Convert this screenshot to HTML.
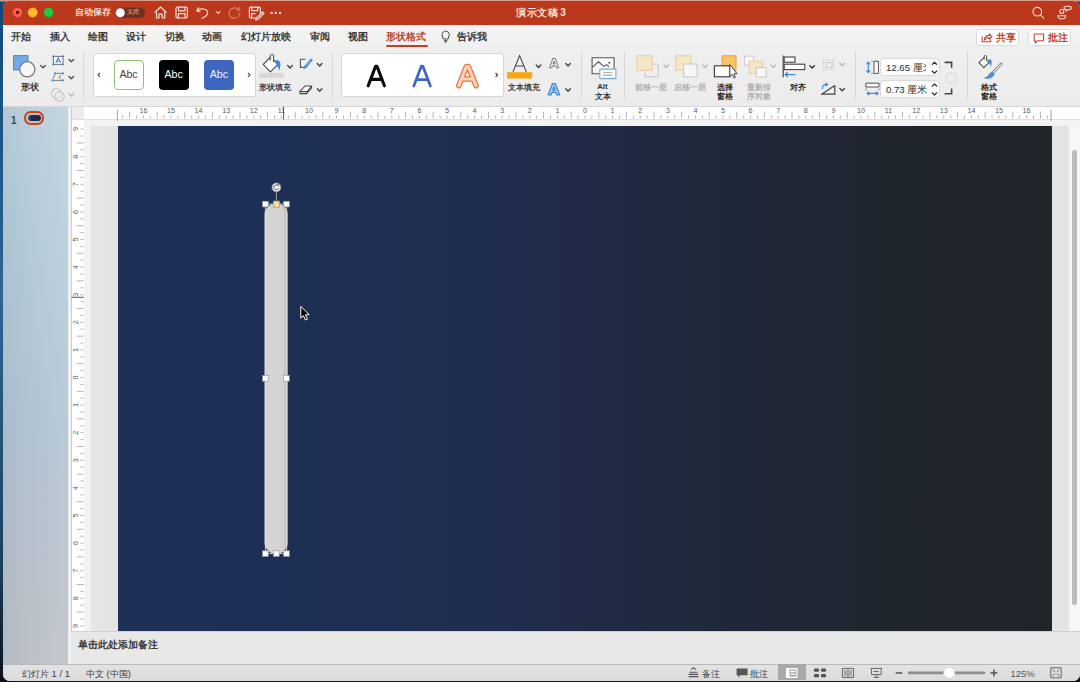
<!DOCTYPE html>
<html><head><meta charset="utf-8">
<style>
*{margin:0;padding:0;box-sizing:border-box}
html,body{width:1080px;height:682px;overflow:hidden}
body{position:relative;font-family:"Liberation Sans",sans-serif;background:linear-gradient(180deg,#d89a8a 0px,#d89a8a 1px,#0f4a7a 2px,#2e6590 300px,#1c4060 560px,#0a121c 682px)}
.abs{position:absolute}
.win{position:absolute;left:3px;top:1px;width:1077px;height:679.5px;border-radius:7px;overflow:hidden;background:#e6e6e6}
.t{position:absolute;white-space:nowrap;line-height:1}
svg{position:absolute;overflow:visible}
</style></head><body>
<div class="win">

<div class="abs" style="left:-3px;top:-1px;width:1080px;height:682px">
<div class="abs" style="left:0;top:0;width:1090px;height:25px;background:#bc381c"></div>
<svg style="left:0;top:0" width="1080" height="25">
<circle cx="17.5" cy="12.5" r="4.8" fill="#fe5f57" stroke="#c2402f" stroke-width="0.6"/>
<circle cx="17.5" cy="12.5" r="1.7" fill="#6e0b05"/>
<circle cx="32.7" cy="12.5" r="4.8" fill="#febc2e" stroke="#c58a1c" stroke-width="0.6"/>
<circle cx="48.6" cy="12.5" r="4.8" fill="#28c840" stroke="#1e9a30" stroke-width="0.6"/>
</svg>
<div class="t" style="left:75px;top:8px;font-size:8.6px;font-weight:600;color:#f6dcd5">自动保存</div>
<svg style="left:0;top:0" width="1080" height="25">
<rect x="114.8" y="7.6" width="30.2" height="10.4" rx="5.2" fill="#6d3024"/>
<circle cx="120.2" cy="12.8" r="4.6" fill="#ffffff"/>
</svg>
<div class="t" style="left:127px;top:9.6px;font-size:5.8px;color:#e6b8ad">关闭</div>
<svg style="left:0;top:0" width="1080" height="25" fill="none" stroke="#f7e2dc" stroke-width="1.2" stroke-linejoin="round" stroke-linecap="round">
<path d="M155 12.2 L160.6 7 L166.2 12.2 M156.5 11 V18 H159 V14.2 H162.2 V18 H164.8 V11"/>
<rect x="176" y="7.2" width="11.4" height="10.8" rx="1.5"/>
<path d="M178.5 7.4 V10.8 H184.9 V7.4 M178.3 18 V13.6 H185.1 V18"/>
<path d="M198.2 7.8 L196.8 10.8 L200 11.6 M197.2 10.6 C200 7.8 207.6 8.4 207.6 12.6 C207.6 15.6 204.4 17.4 202 18.2"/>
<path d="M216.4 11.6 L218.2 13.4 L220 11.6" stroke-width="1.1"/>
<path d="M239.2 10 C237.8 7.2 232 7 229.6 10.6 C227.6 14.2 230.6 18.4 234.4 18.2 C237.2 18 239.6 15.8 239.8 12.8 M239.6 7.2 V10.2 H236.6" stroke="#d47a63"/>
<rect x="249.4" y="7.2" width="11" height="10.8" rx="1.5"/>
<path d="M251.8 7.4 V10.6 H257.8 V7.4 M251.6 18 V13.6 H255"/>
<path d="M256 18.4 L262.6 11.8 L264 13.2 L257.4 19.6 L255.6 19.8 Z" fill="#bc381c"/>
</svg>
<svg style="left:0;top:0" width="1080" height="25" fill="#f7e2dc">
<circle cx="271.6" cy="12.9" r="1.2"/><circle cx="275.8" cy="12.9" r="1.2"/><circle cx="280" cy="12.9" r="1.2"/>
</svg>
<div class="t" style="left:516.3px;top:8px;font-size:10px;color:#f8e4de;font-weight:700;letter-spacing:0.6px">演示文稿<span style="margin-left:1.5px">3</span></div>
<svg style="left:0;top:0" width="1080" height="25" fill="none" stroke="#f7e2dc" stroke-width="1.1" stroke-linecap="round">
<circle cx="1037.3" cy="11.7" r="4.3"/><path d="M1040.4 14.8 L1043.8 18.2"/>
<circle cx="1061.8" cy="11.5" r="2"/>
<path d="M1058 15.8 H1065.6 C1065.6 18.4 1063.6 19 1061.8 19 C1060 19 1058 18.4 1058 15.8 Z"/>
<path d="M1064 7.8 C1064 6.6 1065 6.2 1066.4 6.2 H1069 C1070.4 6.2 1071.2 6.8 1071.2 8 C1071.2 9.2 1070.4 9.8 1069 9.8 H1067.6 L1066.4 11 V9.8 C1064.8 9.8 1064 9.2 1064 7.8 Z"/>
</svg>
<div class="abs" style="left:0;top:25px;width:1090px;height:82px;background:linear-gradient(180deg,#f4f4f4,#efefef 30%,#ececec);border-bottom:1px solid #d6d6d6"></div>
<div class="t" style="left:11.2px;top:31.5px;font-size:10px;font-weight:600;color:#3a3a3a">开始</div>
<div class="t" style="left:50px;top:31.5px;font-size:10px;font-weight:600;color:#3a3a3a">插入</div>
<div class="t" style="left:87.5px;top:31.5px;font-size:10px;font-weight:600;color:#3a3a3a">绘图</div>
<div class="t" style="left:126.2px;top:31.5px;font-size:10px;font-weight:600;color:#3a3a3a">设计</div>
<div class="t" style="left:164.5px;top:31.5px;font-size:10px;font-weight:600;color:#3a3a3a">切换</div>
<div class="t" style="left:202px;top:31.5px;font-size:10px;font-weight:600;color:#3a3a3a">动画</div>
<div class="t" style="left:240.5px;top:31.5px;font-size:10px;font-weight:600;color:#3a3a3a">幻灯片放映</div>
<div class="t" style="left:310px;top:31.5px;font-size:10px;font-weight:600;color:#3a3a3a">审阅</div>
<div class="t" style="left:347.5px;top:31.5px;font-size:10px;font-weight:600;color:#3a3a3a">视图</div>
<div class="t" style="left:386px;top:31.5px;font-size:10px;font-weight:600;color:#c0452a">形状格式</div>
<div class="abs" style="left:386px;top:44.6px;width:41.5px;height:2.4px;border-radius:1.2px;background:#c23f1f"></div>
<svg style="left:0;top:0" width="1080" height="60" fill="none" stroke="#444" stroke-width="1">
<path d="M443.3 39 C443.3 37.5 442 36.5 442 34.8 C442 32.6 443.8 31.2 445.7 31.2 C447.6 31.2 449.4 32.6 449.4 34.8 C449.4 36.5 448.1 37.5 448.1 39 Z"/>
<path d="M444 40.6 H447.4 M444.4 42 H447"/>
</svg>
<div class="t" style="left:457px;top:31.5px;font-size:10px;font-weight:600;color:#3a3a3a">告诉我</div>
<div class="abs" style="left:975.6px;top:28.7px;width:43.8px;height:17.5px;border-radius:3px;background:#fff;border:1px solid #dcdcdc"></div>
<div class="abs" style="left:1028px;top:28.7px;width:43.3px;height:17.5px;border-radius:3px;background:#fff;border:1px solid #dcdcdc"></div>
<div class="t" style="left:995.5px;top:32.8px;font-size:10px;color:#c0432a;font-weight:bold">共享</div>
<div class="t" style="left:1048.3px;top:32.8px;font-size:10px;color:#c0432a;font-weight:bold">批注</div>
<svg style="left:0;top:0" width="1080" height="60" fill="none" stroke="#c0432a" stroke-width="1.1" stroke-linejoin="round">
<path d="M982.2 36.4 V41.8 H990.6 V39.6"/>
<path d="M984.4 40 C984.6 36.6 986.6 35.4 989.4 35.4 V33.8 L992 36.6 L989.4 39.2 V37.6 C987.4 37.6 985.8 38.2 984.4 40 Z"/>
<path d="M1034.2 34 H1043.6 V40.8 H1037.6 L1035.4 42.8 V40.8 H1034.2 Z"/>
</svg>
<div class="abs" style="left:83.3px;top:52px;width:1px;height:47px;background:#d8d8d8"></div>
<div class="abs" style="left:332.0px;top:52px;width:1px;height:47px;background:#d8d8d8"></div>
<div class="abs" style="left:580.7px;top:52px;width:1px;height:47px;background:#d8d8d8"></div>
<div class="abs" style="left:624.3px;top:52px;width:1px;height:47px;background:#d8d8d8"></div>
<div class="abs" style="left:854.5px;top:52px;width:1px;height:47px;background:#d8d8d8"></div>
<div class="abs" style="left:966.6px;top:52px;width:1px;height:47px;background:#d8d8d8"></div>
<svg style="left:0;top:0" width="1080" height="110">
<rect x="13.6" y="55.6" width="14.4" height="14.4" fill="#72aae4" stroke="#3f8bd9" stroke-width="1"/>
<circle cx="27.3" cy="69.3" r="7.6" fill="#f7f7f7" stroke="#7a7a7a" stroke-width="1.3"/>
<rect x="53.4" y="56.4" width="9.6" height="8" fill="#fff" stroke="#7a7a7a" stroke-width="1.1"/>
<path d="M55.8 63 L58.2 57.8 L60.6 63 M56.7 61.2 H59.7" fill="none" stroke="#3f8bd9" stroke-width="1.1"/>
<g fill="#3f8bd9"><circle cx="53.2" cy="56.2" r="1"/><circle cx="63.2" cy="56.2" r="1"/><circle cx="53.2" cy="64.6" r="1"/><circle cx="63.2" cy="64.6" r="1"/>
<rect x="54" y="72.4" width="2" height="2"/><rect x="61.8" y="72.4" width="2" height="2"/><rect x="51.6" y="79.4" width="2" height="2"/><rect x="61.8" y="79.4" width="2" height="2"/></g>
<path d="M56 73.4 H61.8 M60.8 75 L59 77.2 L60.8 78.8 M53 78.6 L54.8 75 M53.6 80.4 H61.8" fill="none" stroke="#7a7a7a" stroke-width="1"/>
<circle cx="56.4" cy="93.4" r="4.8" fill="#f2f2f2" stroke="#c4c4c4" stroke-width="1.1"/>
<circle cx="59.4" cy="96.4" r="4.8" fill="#e9e9e9" fill-opacity="0.6" stroke="#c4c4c4" stroke-width="1.1"/>
</svg>
<svg style="left:0;top:0" width="1080" height="110"><path d="M40.7 65.39999999999999 L43 67.8 L45.3 65.39999999999999" fill="none" stroke="#555" stroke-width="1.4" stroke-linecap="round" stroke-linejoin="round"/><path d="M69.0 59.4 L71.3 61.800000000000004 L73.6 59.4" fill="none" stroke="#555" stroke-width="1.4" stroke-linecap="round" stroke-linejoin="round"/><path d="M69.0 76.39999999999999 L71.3 78.8 L73.6 76.39999999999999" fill="none" stroke="#555" stroke-width="1.4" stroke-linecap="round" stroke-linejoin="round"/><path d="M69.0 93.6 L71.3 96.0 L73.6 93.6" fill="none" stroke="#bbb" stroke-width="1.4" stroke-linecap="round" stroke-linejoin="round"/></svg>
<div class="t" style="left:20.8px;top:83.1px;font-size:8.6px;font-weight:600;color:#3a3a3a">形状</div>
<div class="abs" style="left:92.5px;top:52.6px;width:163.3px;height:44.7px;background:#fff;border:1px solid #d6d6d6;border-radius:3px"></div>
<div class="abs" style="left:113.9px;top:60px;width:29.7px;height:29.7px;background:#fff;border:1.2px solid #8fbf74;border-radius:4px"></div>
<div class="abs" style="left:159px;top:60px;width:29.7px;height:29.7px;background:#000;border-radius:4px"></div>
<div class="abs" style="left:204.2px;top:60px;width:29.7px;height:29.7px;background:#3e68bf;border-radius:4px"></div>
<div class="t" style="left:119.4px;top:69.4px;font-size:10.6px;color:#444">Abc</div>
<div class="t" style="left:164.5px;top:69.4px;font-size:10.6px;color:#fff">Abc</div>
<div class="t" style="left:209.7px;top:69.4px;font-size:10.6px;color:#f0f4ff">Abc</div>
<svg style="left:0;top:0" width="1080" height="110" fill="none" stroke="#444" stroke-width="1.1">
<path d="M100 72.8 L98 74.8 L100 76.8"/><path d="M248 72.8 L250 74.8 L248 76.8"/>
</svg>
<svg style="left:0;top:0" width="1080" height="110" fill="none" stroke-linejoin="round">
<path d="M263.2 64.4 L270.6 57 L278 64.3 L270.4 71.8 Z" fill="#fff" stroke="#4a4a4a" stroke-width="1.1"/>
<path d="M270.2 60.6 V55.8 C270.2 54 273.6 54 273.6 55.8 V62" fill="#f4f4f4" stroke="#4a4a4a" stroke-width="1"/>
<path d="M275.2 60.6 C278.4 59.2 281 61.6 280.4 65.4 C280 67.6 279.6 69 279.4 70.8 C278.6 68.4 277.8 66 275.8 63.8 C276.4 62.6 276 61.4 275.2 60.6 Z" fill="#3d88d6"/>
<rect x="259" y="73" width="24.6" height="5" fill="#d8d8d8" stroke="none"/>
<path d="M305.6 59.3 H300.4 V67.4 H303.6" stroke="#555" stroke-width="1.1"/>
<path d="M304.4 66.6 L310.4 59.2 C311 58.4 312.6 59.6 312 60.4 L306 67.8 L303.8 68.6 Z" fill="#3d88d6" stroke="#3d88d6" stroke-width="0.8"/>
<path d="M306.4 65.2 L310.2 60.6" stroke="#cfe3f7" stroke-width="0.7"/>
<path d="M300 91.4 L305 86 H311.6 L307.2 91.6 Z" fill="#fff" stroke="#444" stroke-width="1.1"/>
<path d="M300 91.4 V93.6 H306.6 L311.6 88 V86" stroke="#444" stroke-width="1.1"/>
</svg>
<svg style="left:0;top:0" width="1080" height="110"><path d="M287.7 65.5 L290 67.9 L292.3 65.5" fill="none" stroke="#444" stroke-width="1.4" stroke-linecap="round" stroke-linejoin="round"/><path d="M317.3 63.599999999999994 L319.6 66.0 L321.90000000000003 63.599999999999994" fill="none" stroke="#444" stroke-width="1.4" stroke-linecap="round" stroke-linejoin="round"/><path d="M317.3 88.8 L319.6 91.2 L321.90000000000003 88.8" fill="none" stroke="#444" stroke-width="1.4" stroke-linecap="round" stroke-linejoin="round"/></svg>
<div class="t" style="left:259px;top:84.1px;font-size:8.2px;font-weight:600;color:#3a3a3a">形状填充</div>
<div class="abs" style="left:341px;top:53px;width:163.2px;height:44.4px;background:#fff;border:1px solid #d6d6d6;border-radius:3px"></div>
<svg style="left:0;top:0" width="1080" height="110">
<path d="M368.2 85.8 L375.6 66.2 H377 L384.4 85.8 M371 79.4 H381.6" fill="none" stroke="#0a0a0a" stroke-width="3.1" stroke-linecap="round" stroke-linejoin="round"/>
<path d="M413.8 86 L421.4 66 H422.8 L430.4 86 M416.6 79.6 H427.6" fill="none" stroke="#3d66c4" stroke-width="2.7" stroke-linecap="round" stroke-linejoin="round"/>
<path d="M458.8 85.6 L466.4 66.6 H468.4 L476 85.6 M462 79 H472.8" fill="none" stroke="#e8773e" stroke-width="5.6" stroke-linecap="round" stroke-linejoin="round"/>
<path d="M458.8 85.6 L466.4 66.6 H468.4 L476 85.6 M462 79 H472.8" fill="none" stroke="#fbd6bd" stroke-width="3" stroke-linecap="round" stroke-linejoin="round"/>
<path d="M495.6 73 L497.6 75 L495.6 77" fill="none" stroke="#444" stroke-width="1.1"/>
</svg>
<svg style="left:0;top:0" width="1080" height="110" fill="none">
<path d="M513 71.9 L519.6 55.6 L526.3 71.9 M515.2 66 H524" stroke="#444" stroke-width="1.1"/>
<rect x="507" y="72.2" width="25.2" height="6.3" fill="#f7a80d"/>
<path d="M549.6 67.8 L552.8 58.5 L555.4 58.5 L558.6 67.8 L556.3 67.8 L555.5 65.8 L552.7 65.8 L551.9 67.8 Z M553.1 63.9 L555.1 63.9 L554.1 61.1 Z" fill="#f2f2f2" stroke="#6a6a6a" stroke-width="0.9" stroke-linejoin="round"/>
<path d="M548.2 94.8 L552.3 83.7 L555.5 83.7 L559.6 94.8 L556.6 94.8 L555.7 92.4 L552.1 92.4 L551.2 94.8 Z M552.6 90.1 L555.2 90.1 L553.9 86.8 Z" fill="#a9cdf0" stroke="#3d88d6" stroke-width="1.2" stroke-linejoin="round"/>
</svg>
<svg style="left:0;top:0" width="1080" height="110"><path d="M536.2 65.1 L538.5 67.5 L540.8 65.1" fill="none" stroke="#444" stroke-width="1.4" stroke-linecap="round" stroke-linejoin="round"/><path d="M565.8000000000001 63.599999999999994 L568.1 66.0 L570.4 63.599999999999994" fill="none" stroke="#444" stroke-width="1.4" stroke-linecap="round" stroke-linejoin="round"/><path d="M565.8000000000001 88.8 L568.1 91.2 L570.4 88.8" fill="none" stroke="#444" stroke-width="1.4" stroke-linecap="round" stroke-linejoin="round"/></svg>
<div class="t" style="left:507.8px;top:84.1px;font-size:8.2px;font-weight:600;color:#3a3a3a">文本填充</div>
<svg style="left:0;top:0" width="1080" height="110" fill="none" stroke="#555" stroke-width="1.1">
<path d="M599.8 73.8 H592.1 V57.7 H614.1 V69.2 H599.8 Z" fill="#fafafa" stroke="none"/><path d="M599.8 73.8 H592.1 V57.7 H614.1 V69.2"/>
<path d="M592.4 67.4 L598.4 61.8 L603.8 66.4 L606.8 64.6 L609 67"/>
<circle cx="609.3" cy="62.7" r="1" fill="#555" stroke="none"/>
<rect x="599.8" y="69.2" width="16.1" height="9.4" rx="0.8" fill="#fff" stroke="#6fb0de" stroke-width="1.2"/>
<path d="M603.2 72.6 H612.4" stroke="#aaa" stroke-width="1"/><path d="M603.2 75.2 H612.4" stroke="#888" stroke-width="0.9"/>
</svg>
<div class="t" style="left:597.2px;top:82.8px;font-size:7.8px;color:#333;font-weight:bold">Alt</div>
<div class="t" style="left:595.4px;top:91.6px;font-size:8.4px;font-weight:600;color:#3a3a3a">文本</div>
<svg style="left:0;top:0" width="1080" height="110" stroke-width="1">
<rect x="636.8" y="55.8" width="15.4" height="14.4" fill="#f6e6c8" stroke="#f1c9a4"/>
<path d="M652.2 64 H658.2 V76.9 H644.9 V70.2" fill="none" stroke="#c6c6c6"/>
<rect x="675.6" y="55.8" width="15.4" height="14.4" fill="#f6e6c8" stroke="#f1c9a4"/>
<rect x="683.6" y="64" width="13.4" height="12.9" fill="#f6f6f6" stroke="#c6c6c6"/>
<rect x="722.2" y="55.8" width="13.8" height="14.4" fill="#fbc56a" stroke="#e59c2b"/>
<rect x="714.4" y="65.8" width="15.6" height="11" fill="#fff" stroke="#444" stroke-width="1.2"/>
<path d="M729.8 64.6 V76.4 L732.2 74.4 L734 78 L735.4 77.2 L733.8 73.8 L737 73.6 Z" fill="#fff" stroke="#333" stroke-width="0.9" stroke-linejoin="round"/>
<rect x="744.6" y="56.2" width="9" height="9" fill="#f7f7f7" stroke="#c8c8c8"/>
<rect x="749.2" y="61" width="13.6" height="12.6" fill="#f6e6c8" stroke="#f1c9a4"/>
<rect x="756.4" y="67.6" width="9.8" height="9.4" fill="#f7f7f7" stroke="#c8c8c8"/>
<path d="M783.2 55.6 V77.2" fill="none" stroke="#444" stroke-width="1.2"/>
<rect x="784.2" y="57" width="10.8" height="5.2" fill="#fff" stroke="#444" stroke-width="1.1"/>
<rect x="784.2" y="64.2" width="20.6" height="5.4" fill="#fff" stroke="#444" stroke-width="1.1"/>
<path d="M785.2 74.6 H795.4 M787.8 72.2 L785.2 74.6 L787.8 77" fill="none" stroke="#3d84d0" stroke-width="1.2"/>
<rect x="823.4" y="60" width="10" height="9.6" fill="none" stroke="#c8c8c8" stroke-dasharray="1.5 1.2"/>
<rect x="826" y="62.6" width="6" height="5" fill="none" stroke="#c8c8c8"/>
<path d="M821.6 94.2 L834.8 85.6 V94.2 Z" fill="none" stroke="#444" stroke-width="1.2" stroke-linejoin="round"/>
<path d="M822.4 89.2 C822 86 824 84.2 827.4 84.4 M825.6 82.6 L827.6 84.4 L825.6 86.2" fill="none" stroke="#3d84d0" stroke-width="1.1"/>
</svg>
<svg style="left:0;top:0" width="1080" height="110"><path d="M663.9000000000001 65.0 L666.2 67.4 L668.5 65.0" fill="none" stroke="#bbb" stroke-width="1.4" stroke-linecap="round" stroke-linejoin="round"/><path d="M702.8000000000001 65.0 L705.1 67.4 L707.4 65.0" fill="none" stroke="#bbb" stroke-width="1.4" stroke-linecap="round" stroke-linejoin="round"/><path d="M771.0 65.0 L773.3 67.4 L775.5999999999999 65.0" fill="none" stroke="#bbb" stroke-width="1.4" stroke-linecap="round" stroke-linejoin="round"/><path d="M809.9000000000001 65.7 L812.2 68.10000000000001 L814.5 65.7" fill="none" stroke="#333" stroke-width="1.4" stroke-linecap="round" stroke-linejoin="round"/><path d="M839.9000000000001 63.3 L842.2 65.7 L844.5 63.3" fill="none" stroke="#bbb" stroke-width="1.4" stroke-linecap="round" stroke-linejoin="round"/><path d="M839.9000000000001 88.39999999999999 L842.2 90.8 L844.5 88.39999999999999" fill="none" stroke="#444" stroke-width="1.4" stroke-linecap="round" stroke-linejoin="round"/></svg>
<div class="t" style="left:635px;top:84.1px;font-size:8.2px;font-weight:600;color:#b0b0b0">前移一层</div>
<div class="t" style="left:674px;top:84.1px;font-size:8.2px;font-weight:600;color:#b0b0b0">后移一层</div>
<div class="t" style="left:716.5px;top:84.1px;font-size:8.2px;font-weight:600;color:#2a2a2a">选择</div>
<div class="t" style="left:716.5px;top:93px;font-size:8.2px;font-weight:600;color:#2a2a2a">窗格</div>
<div class="t" style="left:746.6px;top:84.1px;font-size:8.2px;font-weight:600;color:#b0b0b0">重新排</div>
<div class="t" style="left:746.6px;top:93px;font-size:8.2px;font-weight:600;color:#b0b0b0">序对象</div>
<div class="t" style="left:790px;top:84.1px;font-size:8.2px;font-weight:600;color:#2a2a2a">对齐</div>
<div class="abs" style="left:880.4px;top:58.2px;width:59.7px;height:18px;background:#fff;border:1px solid #dadada;border-radius:4px;overflow:hidden"><div class="t" style="left:4.6px;top:4.2px;font-size:9.6px;color:#2a2a2a;width:40px;overflow:hidden">12.65 厘米</div></div>
<div class="abs" style="left:880.4px;top:79.9px;width:59.7px;height:18px;background:#fff;border:1px solid #dadada;border-radius:4px;overflow:hidden"><div class="t" style="left:4.6px;top:4.2px;font-size:9.6px;color:#2a2a2a">0.73 厘米</div></div>
<svg style="left:0;top:0" width="1080" height="110" fill="none" stroke="#333" stroke-width="1.2" stroke-linecap="round" stroke-linejoin="round">
<path d="M932.2 64.4 L934.5 62.2 L936.8 64.4 M932.2 71 L934.5 73.2 L936.8 71"/>
<path d="M932.2 86.2 L934.5 84 L936.8 86.2 M932.2 92.8 L934.5 95 L936.8 92.8"/>
<path d="M944.6 62.4 H951.6 V67.8 M944.6 93.8 H951.6 V88.4" stroke="#444" stroke-width="1.6" stroke-linecap="butt" stroke-linejoin="miter"/>
<rect x="946.2" y="73" width="10" height="10.2" rx="2.2" fill="#ececec" stroke="#d2d2d2" stroke-width="0.8"/>
<rect x="874.4" y="61.2" width="4" height="12.2" fill="#fff" stroke="#555" stroke-width="1"/>
<path d="M868.3 62.4 V72.2 M866.6 64 L868.3 62 L870 64 M866.6 70.6 L868.3 72.6 L870 70.6" stroke="#3d88d6" stroke-width="1.1"/>
<path d="M871.6 61.2 H873 M871.6 73.4 H873" stroke="#777" stroke-width="0.8"/>
<rect x="866.2" y="83.2" width="12.8" height="3.8" fill="#fff" stroke="#555" stroke-width="1"/>
<path d="M867.4 93.4 H877.8 M869 91.8 L867.1 93.4 L869 95 M876.2 91.8 L878.1 93.4 L876.2 95" stroke="#3d88d6" stroke-width="1.1"/>
<path d="M866.2 88.6 V90 M879 88.6 V90" stroke="#777" stroke-width="0.8"/>
</svg>
<svg style="left:0;top:0" width="1080" height="110" fill="none" stroke-linejoin="round">
<path d="M978.9 62.7 L984 57.6 L989.2 62.4 L983.8 67.6 Z" fill="#fff" stroke="#4a4a4a" stroke-width="1.1"/>
<path d="M984.2 59.6 V56.6 C984.2 55.2 986.6 55.2 986.6 56.6 V60.8" fill="#f4f4f4" stroke="#4a4a4a" stroke-width="1"/>
<path d="M988.2 59.4 C990.6 58.4 992 60.4 991.6 63 C991.4 64.6 991.2 65.6 991 67 C990.4 65.4 989.8 63.6 988.6 62 C989 61 988.8 60.2 988.2 59.4 Z" fill="#3d88d6"/>
<path d="M1001 63.8 L992.3 73.4" stroke="#666" stroke-width="2.6" stroke-linecap="round"/>
<path d="M1001 63.8 L992.3 73.4" stroke="#fff" stroke-width="1.1" stroke-linecap="round"/>
<path d="M992.8 72.4 C990.6 72.2 989 73.8 988.2 75.6 C987.4 77 986 77.6 984.4 77.8 C988.4 79.4 993.2 77.8 994.2 74.2 Z" fill="#4a90dc" stroke="#3d88d6" stroke-width="0.6"/>
</svg>
<div class="t" style="left:980.6px;top:84.1px;font-size:8.2px;font-weight:600;color:#2a2a2a">格式</div>
<div class="t" style="left:980.6px;top:93px;font-size:8.2px;font-weight:600;color:#2a2a2a">窗格</div>
<div class="abs" style="left:0;top:107px;width:68px;height:557px;background:linear-gradient(180deg,#bfd5e0 0%,#b8cddb 35%,#b6c7d6 60%,#bec5ce 85%,#c2c6cc 100%)"></div>
<div class="abs" style="left:0;top:107px;width:68px;height:557px;background:linear-gradient(90deg,rgba(40,60,80,0.09),rgba(40,60,80,0.03) 45%,rgba(255,255,255,0.04) 100%)"></div>
<div class="abs" style="left:68px;top:107px;width:4px;height:557px;background:#eef0f2;border-right:1px solid #cfcfcf"></div>
<div class="t" style="left:11px;top:115.8px;font-size:10px;font-weight:bold;color:#444">1</div>
<div class="abs" style="left:24.4px;top:111.3px;width:19.5px;height:13.4px;border-radius:6.5px;background:#cdbfb8;border:2.5px solid #c9441f"></div>
<div class="abs" style="left:27.6px;top:114.6px;width:13.2px;height:6.8px;border-radius:3.4px;background:linear-gradient(90deg,#3c5a90,#1d2d55 25%,#1c2740)"></div>
<div class="abs" style="left:72px;top:107px;width:12px;height:13px;background:#ececec;border-bottom:1px solid #dedede"></div>
<div class="abs" style="left:84px;top:107px;width:1000px;height:13px;background:#fff;border-bottom:1px solid #e0e0e0"></div>
<div class="abs" style="left:72px;top:120px;width:12px;height:510.5px;background:#fff"></div>
<div class="abs" style="left:84px;top:120px;width:985px;height:510.5px;background:#e4e4e4"></div>
<div class="abs" style="left:84px;top:120px;width:1000px;height:5.5px;background:#f3f3f3"></div>
<div class="abs" style="left:84px;top:120px;width:6.5px;height:510.5px;background:#f3f3f3"></div>
<div class="abs" style="left:90.5px;top:125.5px;width:27.5px;height:505px;background:linear-gradient(90deg,#e7e7e7,#e2e2e2)"></div>
<div class="abs" style="left:118px;top:125.5px;width:934.3px;height:505px;background:linear-gradient(90deg,#1e3059 0%,#1e2f54 22%,#1f2d4f 40%,#1f2a40 58%,#1f2839 68%,#20262e 82%,#20252c 100%)"></div>
<div class="abs" style="left:1068.7px;top:125.5px;width:20px;height:505px;background:#f7f7f7"></div>
<div class="abs" style="left:1071.5px;top:150px;width:5.8px;height:454.6px;border-radius:3px;background:#bcbcbc"></div>
<svg style="left:0;top:0" width="1080" height="682" stroke="#a6a6a6" stroke-width="0.85" font-family="Liberation Sans" font-size="7.2" fill="#5a5a5a" text-anchor="middle">
<line x1="122.7" y1="115.5" x2="122.7" y2="118.5"/>
<line x1="129.6" y1="111.5" x2="129.6" y2="118.5"/>
<line x1="136.5" y1="115.5" x2="136.5" y2="118.5"/>
<line x1="143.4" y1="115.5" x2="143.4" y2="118.5"/>
<text stroke="none" x="143.4" y="112.8">16</text>
<line x1="150.3" y1="115.5" x2="150.3" y2="118.5"/>
<line x1="157.2" y1="111.5" x2="157.2" y2="118.5"/>
<line x1="164.1" y1="115.5" x2="164.1" y2="118.5"/>
<line x1="171.0" y1="115.5" x2="171.0" y2="118.5"/>
<text stroke="none" x="171.0" y="112.8">15</text>
<line x1="177.9" y1="115.5" x2="177.9" y2="118.5"/>
<line x1="184.8" y1="111.5" x2="184.8" y2="118.5"/>
<line x1="191.7" y1="115.5" x2="191.7" y2="118.5"/>
<line x1="198.6" y1="115.5" x2="198.6" y2="118.5"/>
<text stroke="none" x="198.6" y="112.8">14</text>
<line x1="205.5" y1="115.5" x2="205.5" y2="118.5"/>
<line x1="212.4" y1="111.5" x2="212.4" y2="118.5"/>
<line x1="219.3" y1="115.5" x2="219.3" y2="118.5"/>
<line x1="226.2" y1="115.5" x2="226.2" y2="118.5"/>
<text stroke="none" x="226.2" y="112.8">13</text>
<line x1="233.1" y1="115.5" x2="233.1" y2="118.5"/>
<line x1="240.0" y1="111.5" x2="240.0" y2="118.5"/>
<line x1="246.9" y1="115.5" x2="246.9" y2="118.5"/>
<line x1="253.8" y1="115.5" x2="253.8" y2="118.5"/>
<text stroke="none" x="253.8" y="112.8">12</text>
<line x1="260.7" y1="115.5" x2="260.7" y2="118.5"/>
<line x1="267.6" y1="111.5" x2="267.6" y2="118.5"/>
<line x1="274.5" y1="115.5" x2="274.5" y2="118.5"/>
<line x1="281.4" y1="115.5" x2="281.4" y2="118.5"/>
<text stroke="none" x="281.4" y="112.8">11</text>
<line x1="288.3" y1="115.5" x2="288.3" y2="118.5"/>
<line x1="295.2" y1="111.5" x2="295.2" y2="118.5"/>
<line x1="302.1" y1="115.5" x2="302.1" y2="118.5"/>
<line x1="309.0" y1="115.5" x2="309.0" y2="118.5"/>
<text stroke="none" x="309.0" y="112.8">10</text>
<line x1="315.9" y1="115.5" x2="315.9" y2="118.5"/>
<line x1="322.8" y1="111.5" x2="322.8" y2="118.5"/>
<line x1="329.7" y1="115.5" x2="329.7" y2="118.5"/>
<line x1="336.6" y1="115.5" x2="336.6" y2="118.5"/>
<text stroke="none" x="336.6" y="112.8">9</text>
<line x1="343.5" y1="115.5" x2="343.5" y2="118.5"/>
<line x1="350.4" y1="111.5" x2="350.4" y2="118.5"/>
<line x1="357.3" y1="115.5" x2="357.3" y2="118.5"/>
<line x1="364.2" y1="115.5" x2="364.2" y2="118.5"/>
<text stroke="none" x="364.2" y="112.8">8</text>
<line x1="371.1" y1="115.5" x2="371.1" y2="118.5"/>
<line x1="378.0" y1="111.5" x2="378.0" y2="118.5"/>
<line x1="384.9" y1="115.5" x2="384.9" y2="118.5"/>
<line x1="391.8" y1="115.5" x2="391.8" y2="118.5"/>
<text stroke="none" x="391.8" y="112.8">7</text>
<line x1="398.7" y1="115.5" x2="398.7" y2="118.5"/>
<line x1="405.6" y1="111.5" x2="405.6" y2="118.5"/>
<line x1="412.5" y1="115.5" x2="412.5" y2="118.5"/>
<line x1="419.4" y1="115.5" x2="419.4" y2="118.5"/>
<text stroke="none" x="419.4" y="112.8">6</text>
<line x1="426.3" y1="115.5" x2="426.3" y2="118.5"/>
<line x1="433.2" y1="111.5" x2="433.2" y2="118.5"/>
<line x1="440.1" y1="115.5" x2="440.1" y2="118.5"/>
<line x1="447.0" y1="115.5" x2="447.0" y2="118.5"/>
<text stroke="none" x="447.0" y="112.8">5</text>
<line x1="453.9" y1="115.5" x2="453.9" y2="118.5"/>
<line x1="460.8" y1="111.5" x2="460.8" y2="118.5"/>
<line x1="467.7" y1="115.5" x2="467.7" y2="118.5"/>
<line x1="474.6" y1="115.5" x2="474.6" y2="118.5"/>
<text stroke="none" x="474.6" y="112.8">4</text>
<line x1="481.5" y1="115.5" x2="481.5" y2="118.5"/>
<line x1="488.4" y1="111.5" x2="488.4" y2="118.5"/>
<line x1="495.3" y1="115.5" x2="495.3" y2="118.5"/>
<line x1="502.2" y1="115.5" x2="502.2" y2="118.5"/>
<text stroke="none" x="502.2" y="112.8">3</text>
<line x1="509.1" y1="115.5" x2="509.1" y2="118.5"/>
<line x1="516.0" y1="111.5" x2="516.0" y2="118.5"/>
<line x1="522.9" y1="115.5" x2="522.9" y2="118.5"/>
<line x1="529.8" y1="115.5" x2="529.8" y2="118.5"/>
<text stroke="none" x="529.8" y="112.8">2</text>
<line x1="536.7" y1="115.5" x2="536.7" y2="118.5"/>
<line x1="543.6" y1="111.5" x2="543.6" y2="118.5"/>
<line x1="550.5" y1="115.5" x2="550.5" y2="118.5"/>
<line x1="557.4" y1="115.5" x2="557.4" y2="118.5"/>
<text stroke="none" x="557.4" y="112.8">1</text>
<line x1="564.3" y1="115.5" x2="564.3" y2="118.5"/>
<line x1="571.2" y1="111.5" x2="571.2" y2="118.5"/>
<line x1="578.1" y1="115.5" x2="578.1" y2="118.5"/>
<line x1="585.0" y1="115.5" x2="585.0" y2="118.5"/>
<text stroke="none" x="585.0" y="112.8">0</text>
<line x1="591.9" y1="115.5" x2="591.9" y2="118.5"/>
<line x1="598.8" y1="111.5" x2="598.8" y2="118.5"/>
<line x1="605.7" y1="115.5" x2="605.7" y2="118.5"/>
<line x1="612.6" y1="115.5" x2="612.6" y2="118.5"/>
<text stroke="none" x="612.6" y="112.8">1</text>
<line x1="619.5" y1="115.5" x2="619.5" y2="118.5"/>
<line x1="626.4" y1="111.5" x2="626.4" y2="118.5"/>
<line x1="633.3" y1="115.5" x2="633.3" y2="118.5"/>
<line x1="640.2" y1="115.5" x2="640.2" y2="118.5"/>
<text stroke="none" x="640.2" y="112.8">2</text>
<line x1="647.1" y1="115.5" x2="647.1" y2="118.5"/>
<line x1="654.0" y1="111.5" x2="654.0" y2="118.5"/>
<line x1="660.9" y1="115.5" x2="660.9" y2="118.5"/>
<line x1="667.8" y1="115.5" x2="667.8" y2="118.5"/>
<text stroke="none" x="667.8" y="112.8">3</text>
<line x1="674.7" y1="115.5" x2="674.7" y2="118.5"/>
<line x1="681.6" y1="111.5" x2="681.6" y2="118.5"/>
<line x1="688.5" y1="115.5" x2="688.5" y2="118.5"/>
<line x1="695.4" y1="115.5" x2="695.4" y2="118.5"/>
<text stroke="none" x="695.4" y="112.8">4</text>
<line x1="702.3" y1="115.5" x2="702.3" y2="118.5"/>
<line x1="709.2" y1="111.5" x2="709.2" y2="118.5"/>
<line x1="716.1" y1="115.5" x2="716.1" y2="118.5"/>
<line x1="723.0" y1="115.5" x2="723.0" y2="118.5"/>
<text stroke="none" x="723.0" y="112.8">5</text>
<line x1="729.9" y1="115.5" x2="729.9" y2="118.5"/>
<line x1="736.8" y1="111.5" x2="736.8" y2="118.5"/>
<line x1="743.7" y1="115.5" x2="743.7" y2="118.5"/>
<line x1="750.6" y1="115.5" x2="750.6" y2="118.5"/>
<text stroke="none" x="750.6" y="112.8">6</text>
<line x1="757.5" y1="115.5" x2="757.5" y2="118.5"/>
<line x1="764.4" y1="111.5" x2="764.4" y2="118.5"/>
<line x1="771.3" y1="115.5" x2="771.3" y2="118.5"/>
<line x1="778.2" y1="115.5" x2="778.2" y2="118.5"/>
<text stroke="none" x="778.2" y="112.8">7</text>
<line x1="785.1" y1="115.5" x2="785.1" y2="118.5"/>
<line x1="792.0" y1="111.5" x2="792.0" y2="118.5"/>
<line x1="798.9" y1="115.5" x2="798.9" y2="118.5"/>
<line x1="805.8" y1="115.5" x2="805.8" y2="118.5"/>
<text stroke="none" x="805.8" y="112.8">8</text>
<line x1="812.7" y1="115.5" x2="812.7" y2="118.5"/>
<line x1="819.6" y1="111.5" x2="819.6" y2="118.5"/>
<line x1="826.5" y1="115.5" x2="826.5" y2="118.5"/>
<line x1="833.4" y1="115.5" x2="833.4" y2="118.5"/>
<text stroke="none" x="833.4" y="112.8">9</text>
<line x1="840.3" y1="115.5" x2="840.3" y2="118.5"/>
<line x1="847.2" y1="111.5" x2="847.2" y2="118.5"/>
<line x1="854.1" y1="115.5" x2="854.1" y2="118.5"/>
<line x1="861.0" y1="115.5" x2="861.0" y2="118.5"/>
<text stroke="none" x="861.0" y="112.8">10</text>
<line x1="867.9" y1="115.5" x2="867.9" y2="118.5"/>
<line x1="874.8" y1="111.5" x2="874.8" y2="118.5"/>
<line x1="881.7" y1="115.5" x2="881.7" y2="118.5"/>
<line x1="888.6" y1="115.5" x2="888.6" y2="118.5"/>
<text stroke="none" x="888.6" y="112.8">11</text>
<line x1="895.5" y1="115.5" x2="895.5" y2="118.5"/>
<line x1="902.4" y1="111.5" x2="902.4" y2="118.5"/>
<line x1="909.3" y1="115.5" x2="909.3" y2="118.5"/>
<line x1="916.2" y1="115.5" x2="916.2" y2="118.5"/>
<text stroke="none" x="916.2" y="112.8">12</text>
<line x1="923.1" y1="115.5" x2="923.1" y2="118.5"/>
<line x1="930.0" y1="111.5" x2="930.0" y2="118.5"/>
<line x1="936.9" y1="115.5" x2="936.9" y2="118.5"/>
<line x1="943.8" y1="115.5" x2="943.8" y2="118.5"/>
<text stroke="none" x="943.8" y="112.8">13</text>
<line x1="950.7" y1="115.5" x2="950.7" y2="118.5"/>
<line x1="957.6" y1="111.5" x2="957.6" y2="118.5"/>
<line x1="964.5" y1="115.5" x2="964.5" y2="118.5"/>
<line x1="971.4" y1="115.5" x2="971.4" y2="118.5"/>
<text stroke="none" x="971.4" y="112.8">14</text>
<line x1="978.3" y1="115.5" x2="978.3" y2="118.5"/>
<line x1="985.2" y1="111.5" x2="985.2" y2="118.5"/>
<line x1="992.1" y1="115.5" x2="992.1" y2="118.5"/>
<line x1="999.0" y1="115.5" x2="999.0" y2="118.5"/>
<text stroke="none" x="999.0" y="112.8">15</text>
<line x1="1005.9" y1="115.5" x2="1005.9" y2="118.5"/>
<line x1="1012.8" y1="111.5" x2="1012.8" y2="118.5"/>
<line x1="1019.7" y1="115.5" x2="1019.7" y2="118.5"/>
<line x1="1026.6" y1="115.5" x2="1026.6" y2="118.5"/>
<text stroke="none" x="1026.6" y="112.8">16</text>
<line x1="1033.5" y1="115.5" x2="1033.5" y2="118.5"/>
<line x1="1040.4" y1="111.5" x2="1040.4" y2="118.5"/>
<line x1="1047.3" y1="115.5" x2="1047.3" y2="118.5"/>
<line x1="80.5" y1="129.1" x2="83.5" y2="129.1"/>
<text stroke="none" transform="translate(77.8 129.1) rotate(-90)" x="0" y="0">9</text>
<line x1="80.5" y1="136.0" x2="83.5" y2="136.0"/>
<line x1="76.8" y1="142.9" x2="83.5" y2="142.9"/>
<line x1="80.5" y1="149.8" x2="83.5" y2="149.8"/>
<line x1="80.5" y1="156.7" x2="83.5" y2="156.7"/>
<text stroke="none" transform="translate(77.8 156.7) rotate(-90)" x="0" y="0">8</text>
<line x1="80.5" y1="163.6" x2="83.5" y2="163.6"/>
<line x1="76.8" y1="170.5" x2="83.5" y2="170.5"/>
<line x1="80.5" y1="177.4" x2="83.5" y2="177.4"/>
<line x1="80.5" y1="184.3" x2="83.5" y2="184.3"/>
<text stroke="none" transform="translate(77.8 184.3) rotate(-90)" x="0" y="0">7</text>
<line x1="80.5" y1="191.2" x2="83.5" y2="191.2"/>
<line x1="76.8" y1="198.1" x2="83.5" y2="198.1"/>
<line x1="80.5" y1="205.0" x2="83.5" y2="205.0"/>
<line x1="80.5" y1="211.9" x2="83.5" y2="211.9"/>
<text stroke="none" transform="translate(77.8 211.9) rotate(-90)" x="0" y="0">6</text>
<line x1="80.5" y1="218.8" x2="83.5" y2="218.8"/>
<line x1="76.8" y1="225.7" x2="83.5" y2="225.7"/>
<line x1="80.5" y1="232.6" x2="83.5" y2="232.6"/>
<line x1="80.5" y1="239.5" x2="83.5" y2="239.5"/>
<text stroke="none" transform="translate(77.8 239.5) rotate(-90)" x="0" y="0">5</text>
<line x1="80.5" y1="246.4" x2="83.5" y2="246.4"/>
<line x1="76.8" y1="253.3" x2="83.5" y2="253.3"/>
<line x1="80.5" y1="260.2" x2="83.5" y2="260.2"/>
<line x1="80.5" y1="267.1" x2="83.5" y2="267.1"/>
<text stroke="none" transform="translate(77.8 267.1) rotate(-90)" x="0" y="0">4</text>
<line x1="80.5" y1="274.0" x2="83.5" y2="274.0"/>
<line x1="76.8" y1="280.9" x2="83.5" y2="280.9"/>
<line x1="80.5" y1="287.8" x2="83.5" y2="287.8"/>
<line x1="80.5" y1="294.7" x2="83.5" y2="294.7"/>
<text stroke="none" transform="translate(77.8 294.7) rotate(-90)" x="0" y="0">3</text>
<line x1="80.5" y1="301.6" x2="83.5" y2="301.6"/>
<line x1="76.8" y1="308.5" x2="83.5" y2="308.5"/>
<line x1="80.5" y1="315.4" x2="83.5" y2="315.4"/>
<line x1="80.5" y1="322.3" x2="83.5" y2="322.3"/>
<text stroke="none" transform="translate(77.8 322.3) rotate(-90)" x="0" y="0">2</text>
<line x1="80.5" y1="329.2" x2="83.5" y2="329.2"/>
<line x1="76.8" y1="336.1" x2="83.5" y2="336.1"/>
<line x1="80.5" y1="343.0" x2="83.5" y2="343.0"/>
<line x1="80.5" y1="349.9" x2="83.5" y2="349.9"/>
<text stroke="none" transform="translate(77.8 349.9) rotate(-90)" x="0" y="0">1</text>
<line x1="80.5" y1="356.8" x2="83.5" y2="356.8"/>
<line x1="76.8" y1="363.7" x2="83.5" y2="363.7"/>
<line x1="80.5" y1="370.6" x2="83.5" y2="370.6"/>
<line x1="80.5" y1="377.5" x2="83.5" y2="377.5"/>
<text stroke="none" transform="translate(77.8 377.5) rotate(-90)" x="0" y="0">0</text>
<line x1="80.5" y1="384.4" x2="83.5" y2="384.4"/>
<line x1="76.8" y1="391.3" x2="83.5" y2="391.3"/>
<line x1="80.5" y1="398.2" x2="83.5" y2="398.2"/>
<line x1="80.5" y1="405.1" x2="83.5" y2="405.1"/>
<text stroke="none" transform="translate(77.8 405.1) rotate(-90)" x="0" y="0">1</text>
<line x1="80.5" y1="412.0" x2="83.5" y2="412.0"/>
<line x1="76.8" y1="418.9" x2="83.5" y2="418.9"/>
<line x1="80.5" y1="425.8" x2="83.5" y2="425.8"/>
<line x1="80.5" y1="432.7" x2="83.5" y2="432.7"/>
<text stroke="none" transform="translate(77.8 432.7) rotate(-90)" x="0" y="0">2</text>
<line x1="80.5" y1="439.6" x2="83.5" y2="439.6"/>
<line x1="76.8" y1="446.5" x2="83.5" y2="446.5"/>
<line x1="80.5" y1="453.4" x2="83.5" y2="453.4"/>
<line x1="80.5" y1="460.3" x2="83.5" y2="460.3"/>
<text stroke="none" transform="translate(77.8 460.3) rotate(-90)" x="0" y="0">3</text>
<line x1="80.5" y1="467.2" x2="83.5" y2="467.2"/>
<line x1="76.8" y1="474.1" x2="83.5" y2="474.1"/>
<line x1="80.5" y1="481.0" x2="83.5" y2="481.0"/>
<line x1="80.5" y1="487.9" x2="83.5" y2="487.9"/>
<text stroke="none" transform="translate(77.8 487.9) rotate(-90)" x="0" y="0">4</text>
<line x1="80.5" y1="494.8" x2="83.5" y2="494.8"/>
<line x1="76.8" y1="501.7" x2="83.5" y2="501.7"/>
<line x1="80.5" y1="508.6" x2="83.5" y2="508.6"/>
<line x1="80.5" y1="515.5" x2="83.5" y2="515.5"/>
<text stroke="none" transform="translate(77.8 515.5) rotate(-90)" x="0" y="0">5</text>
<line x1="80.5" y1="522.4" x2="83.5" y2="522.4"/>
<line x1="76.8" y1="529.3" x2="83.5" y2="529.3"/>
<line x1="80.5" y1="536.2" x2="83.5" y2="536.2"/>
<line x1="80.5" y1="543.1" x2="83.5" y2="543.1"/>
<text stroke="none" transform="translate(77.8 543.1) rotate(-90)" x="0" y="0">6</text>
<line x1="80.5" y1="550.0" x2="83.5" y2="550.0"/>
<line x1="76.8" y1="556.9" x2="83.5" y2="556.9"/>
<line x1="80.5" y1="563.8" x2="83.5" y2="563.8"/>
<line x1="80.5" y1="570.7" x2="83.5" y2="570.7"/>
<text stroke="none" transform="translate(77.8 570.7) rotate(-90)" x="0" y="0">7</text>
<line x1="80.5" y1="577.6" x2="83.5" y2="577.6"/>
<line x1="76.8" y1="584.5" x2="83.5" y2="584.5"/>
<line x1="80.5" y1="591.4" x2="83.5" y2="591.4"/>
<line x1="80.5" y1="598.3" x2="83.5" y2="598.3"/>
<text stroke="none" transform="translate(77.8 598.3) rotate(-90)" x="0" y="0">8</text>
<line x1="80.5" y1="605.2" x2="83.5" y2="605.2"/>
<line x1="76.8" y1="612.1" x2="83.5" y2="612.1"/>
<line x1="80.5" y1="619.0" x2="83.5" y2="619.0"/>
<line x1="80.5" y1="625.9" x2="83.5" y2="625.9"/>
<text stroke="none" transform="translate(77.8 625.9) rotate(-90)" x="0" y="0">9</text>
<line x1="117.4" y1="109.8" x2="117.4" y2="121" stroke="#999" stroke-width="0.9"/>
<line x1="1051.1" y1="109.8" x2="1051.1" y2="121" stroke="#999" stroke-width="0.9"/>
<line x1="283.6" y1="106.5" x2="283.6" y2="119.5" stroke="#555" stroke-width="1"/>
<line x1="71.5" y1="297.3" x2="84" y2="297.3" stroke="#555" stroke-width="1"/>
</svg>
<svg style="left:0;top:0" width="1080" height="682">
<defs><linearGradient id="sg" x1="0" x2="1" y1="0" y2="0">
<stop offset="0" stop-color="#c8c8c8"/><stop offset="0.08" stop-color="#d6d6d6"/><stop offset="0.8" stop-color="#d3d3d3"/><stop offset="0.9" stop-color="#c2c2c2"/><stop offset="1" stop-color="#a8a8a8"/></linearGradient></defs>
<rect x="264.5" y="203.8" width="23.4" height="349.8" rx="11.2" ry="11" fill="url(#sg)"/>
<path d="M265.4 204.1 H286.6 V553.6 H265.4 Z" fill="none" stroke="#e2e2e2" stroke-width="0.9" opacity="0.9"/>
<line x1="276.4" y1="192" x2="276.4" y2="204" stroke="#aaa" stroke-width="0.9"/>
<circle cx="276.4" cy="187.4" r="4.4" fill="#f2f2f2" stroke="#999" stroke-width="0.8"/>
<path d="M278.4 185.8 C277.6 184.6 275.2 184.4 274.2 186 C273.2 187.6 274.2 189.8 276.4 189.8 C277.6 189.8 278.4 189 278.6 188" fill="none" stroke="#555" stroke-width="0.9"/>
<path d="M277.2 185.4 L278.8 185.2 L278.6 183.8" fill="none" stroke="#555" stroke-width="0.8"/>
<g fill="#fff" stroke="#9a9a9a" stroke-width="0.7">
<rect x="262.6" y="201.3" width="5.6" height="5.6"/>
<rect x="283.7" y="201.3" width="5.6" height="5.6"/>
<rect x="262.6" y="375.6" width="5.6" height="5.6"/>
<rect x="283.7" y="375.6" width="5.6" height="5.6"/>
<rect x="262.6" y="550.8" width="5.6" height="5.6"/>
<rect x="273.6" y="550.8" width="5.6" height="5.6"/>
<rect x="283.7" y="550.8" width="5.6" height="5.6"/>
</g>
<rect x="273.3" y="201.1" width="6.2" height="6.2" fill="#f6dc8e" stroke="#b59a55" stroke-width="0.7"/>
</svg>
<svg style="left:0;top:0" width="1080" height="682">
<path d="M300.8 306.4 V318 L303.4 315.6 L305.4 320 L307.4 319.2 L305.4 314.8 L309.2 314.6 Z" fill="#000" stroke="#fff" stroke-width="1" stroke-linejoin="round"/>
</svg>
<div class="abs" style="left:71px;top:630.5px;width:1020px;height:33.5px;background:#e8e8e8;border-top:1px solid #d0d0d0"></div>
<div class="t" style="left:77.8px;top:639.6px;font-size:10px;color:#3a3a3a;font-family:'Liberation Serif',serif;font-weight:600">单击此处添加备注</div>
<div class="abs" style="left:0;top:664px;width:1090px;height:20px;background:linear-gradient(180deg,#e2e2e2,#dadada);border-top:1px solid #b9b9b9"></div>
<div class="t" style="left:22px;top:668.8px;font-size:9.4px;font-weight:normal;color:#3c3c3c">幻灯片 1 / 1</div>
<div class="t" style="left:86px;top:668.8px;font-size:9.4px;font-weight:normal;color:#3c3c3c">中文 (中国)</div>
<div class="t" style="left:702.2px;top:668.8px;font-size:9.4px;font-weight:normal;color:#3c3c3c">备注</div>
<div class="t" style="left:750.4px;top:668.8px;font-size:9.4px;font-weight:normal;color:#3c3c3c">批注</div>
<div class="t" style="left:1010.5px;top:668.8px;font-size:9.4px;color:#555">125%</div>
<div class="abs" style="left:777.8px;top:664px;width:28.5px;height:16px;background:#a9a9a9"></div>
<svg style="left:0;top:0" width="1080" height="682">
<g stroke="#555" stroke-width="1.1" fill="none">
<path d="M688.6 676.6 H698.4 M688.6 674.4 H698.4 M689.6 672.2 H697.4 M691 669.6 L693.5 667.6 L696 669.6"/>
</g>
<path d="M736.6 668.6 H747.6 V675.2 H740.4 L738.2 677.4 V675.2 H736.6 Z" fill="#555"/>
<rect x="786" y="668" width="11.6" height="10" fill="#fff"/>
<rect x="789.4" y="669.4" width="7" height="7.2" fill="#a9a9a9"/>
<rect x="790.4" y="670.6" width="5" height="1.6" fill="#fff"/><rect x="790.4" y="673.6" width="5" height="1.2" fill="#fff"/>
<g fill="#555"><rect x="814" y="668.6" width="5" height="3.2" rx="0.8"/><rect x="821" y="668.6" width="5" height="3.2" rx="0.8"/><rect x="814" y="674" width="5" height="3.2" rx="0.8"/><rect x="821" y="674" width="5" height="3.2" rx="0.8"/></g>
<g stroke="#666" stroke-width="1" fill="none">
<path d="M842.4 668.4 H853.6 V677.4 H842.4 Z M848 668.4 V677.4 M844 671 H846.6 M844 673 H846.6 M844 675 H846.6 M849.4 671 H852 M849.4 673 H852 M849.4 675 H852"/>
<path d="M870.6 668.4 H882 M871.4 668.4 V674.6 H881.2 V668.4 M876.3 674.6 V677.4 M873.6 677.4 H879 M873.4 671.4 H878.6"/>
<path d="M1050.8 667.8 H1061.2 V677.8 H1050.8 Z M1052.6 669.6 L1055 672 M1059.4 669.6 L1057 672 M1052.6 676 L1055 673.6 M1059.4 676 L1057 673.6"/>
</g>
<rect x="895.6" y="672.2" width="6.6" height="1.5" fill="#555"/>
<rect x="907.9" y="671.6" width="77.4" height="2.6" rx="1.3" fill="#8e8e8e"/>
<rect x="990.4" y="672.2" width="7" height="1.5" fill="#555"/><rect x="993.15" y="669.4" width="1.5" height="7" fill="#555"/>
<circle cx="949.2" cy="672.9" r="5.6" fill="#fff" stroke="#cfcfcf" stroke-width="0.6"/>
</svg>
</div></div></body></html>
